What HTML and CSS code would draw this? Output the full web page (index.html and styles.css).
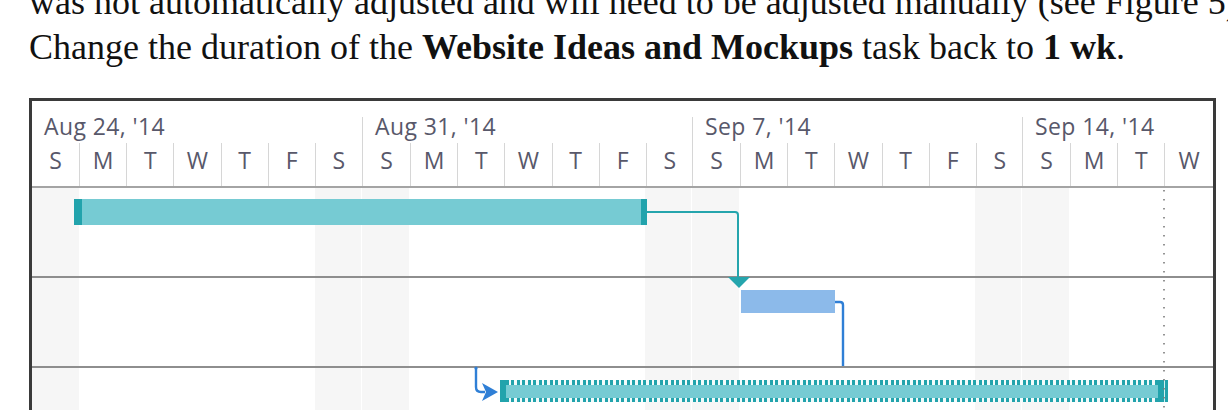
FILE: index.html
```
<!DOCTYPE html>
<html lang="en">
<head>
  <meta charset="UTF-8" />
  <title>Task Dependencies</title>
  <link rel="stylesheet" href="styles.css">
</head>
<body>

  <p class="para">
    was not automatically adjusted and will need to be adjusted manually (see Figure 5).<br>
    Change the duration of the <b>Website Ideas and Mockups</b> task back to <b>1 wk</b>.
  </p>

  <div class="gantt">
    <div class="timescale">
      <div class="week">
        <div class="week-label">Aug 24, '14</div>
        <div class="days"><span>S</span><span>M</span><span>T</span><span>W</span><span>T</span><span>F</span><span>S</span></div>
      </div>
      <div class="week">
        <div class="week-label">Aug 31, '14</div>
        <div class="days"><span>S</span><span>M</span><span>T</span><span>W</span><span>T</span><span>F</span><span>S</span></div>
      </div>
      <div class="week">
        <div class="week-label">Sep 7, '14</div>
        <div class="days"><span>S</span><span>M</span><span>T</span><span>W</span><span>T</span><span>F</span><span>S</span></div>
      </div>
      <div class="week week-last">
        <div class="week-label">Sep 14, '14</div>
        <div class="days"><span>S</span><span>M</span><span>T</span><span>W</span></div>
      </div>
    </div>

    <div class="chart">
      <div class="row">
        <div class="bar" style="left:42px;width:573px"></div>
      </div>
      <div class="row">
        <div class="bar bar-blue" style="left:709px;width:94px"></div>
      </div>
      <div class="row row-last">
        <div class="bar bar-dotted" style="left:468px;width:668px"></div>
      </div>

      <!-- dependency arrows + status date line -->
      <svg class="links" width="1181" height="230">
        <path d="M615 24 H703 Q706 24 706 27 V90" class="link-teal" />
        <polygon points="696,89 718,89 707,100" fill="#25a5ad" />

        <path d="M803 114 H808 Q811 114 811 117 V178" class="link-blue" />
        <circle cx="444" cy="180" r="1.6" fill="#2f7fd6" />
        <path d="M444 180 V199 Q444 204 449 204 H453" class="link-blue" />
        <polygon points="450,195 466,204 450,213 454,204" fill="#2f7fd6" />

        <path d="M1132 2 V230" class="status-line" />
      </svg>
    </div>
  </div>

</body>
</html>
```

FILE: styles.css
```
* {
  margin: 0;
  padding: 0;
  box-sizing: border-box;
}

body {
  background-color: white;
  overflow: hidden;
  height: 410px;
}

.para {
  font-family: "Liberation Serif", "Times New Roman", serif;
  font-size: 36px;
  line-height: 45px;
  color: #111;
  white-space: nowrap;
  margin: -20px 0 0 29px;
}

.gantt {
  margin: 28px 0 0 29px;
  width: 1187px;
  border: 3px solid #3a3a3a;
  border-bottom: none;
  font-family: "Open Sans", "Noto Sans", sans-serif;
  color: #58586a;
}

/* timescale header */
.timescale {
  display: flex;
  padding-top: 16px;
  border-bottom: 2px solid #a4a4a4;
}

.week {
  width: 330px;
  flex-shrink: 0;
  border-left: 1px solid #d6d6d6;
}

.week:first-child {
  border-left: none;
}

.week-last {
  width: auto;
  flex: 1;
}

.week-label {
  height: 26px;
  padding-left: 12px;
  font-size: 23px;
  line-height: 19px;
  letter-spacing: 0.4px;
}

.days {
  display: flex;
  height: 43px;
}

.days span {
  width: 47.14px;
  flex-shrink: 0;
  text-align: center;
  font-size: 23px;
  line-height: 34px;
  border-left: 1px solid #d6d6d6;
}

.days span:first-child {
  border-left: none;
}

.week-last .days span:last-child {
  flex: 1;
}

/* chart body, weekends shaded */
.chart {
  position: relative;
  background: repeating-linear-gradient(90deg,
    #f6f6f6 0 47px,
    #fff 47px 283px,
    #f6f6f6 283px 329px,
    #fff 329px 330px);
}

.row {
  position: relative;
  height: 90px;
  border-bottom: 2px solid #8e8e8e;
}

.row-last {
  height: 60px;
  border-bottom: none;
}

.bar {
  position: absolute;
  top: 11px;
  height: 26px;
  background-color: #76cbd3;
  border-left: 8px solid #22a3ac;
  border-right: 6px solid #22a3ac;
}

.bar-blue {
  top: 12px;
  height: 23px;
  background-color: #8cbaea;
  border: none;
}

.bar-dotted {
  top: 12px;
  height: 22px;
  border-left-width: 6px;
  border-right: none;
  background:
    linear-gradient(#76cbd3, #76cbd3) center / 100% 13px no-repeat,
    repeating-linear-gradient(90deg, #22a3ac 0 3px, #f4fbfb 3px 5.5px);
}

/* finish bracket at the bar's right end */
.bar-dotted::after {
  content: "";
  position: absolute;
  right: 0;
  top: 0;
  width: 10px;
  height: 100%;
  background: linear-gradient(90deg, #22a3ac 0 6px, #cfeef0 6px 7px, #22a3ac 7px);
}

.links {
  position: absolute;
  left: 0;
  top: 0;
  overflow: visible;
  pointer-events: none;
}

.link-teal {
  fill: none;
  stroke: #25a5ad;
  stroke-width: 2;
}

.link-blue {
  fill: none;
  stroke: #2f7fd6;
  stroke-width: 2.4;
}

.status-line {
  stroke: #7a7a7a;
  stroke-width: 1.6;
  stroke-dasharray: 1.6 7.4;
}
```
